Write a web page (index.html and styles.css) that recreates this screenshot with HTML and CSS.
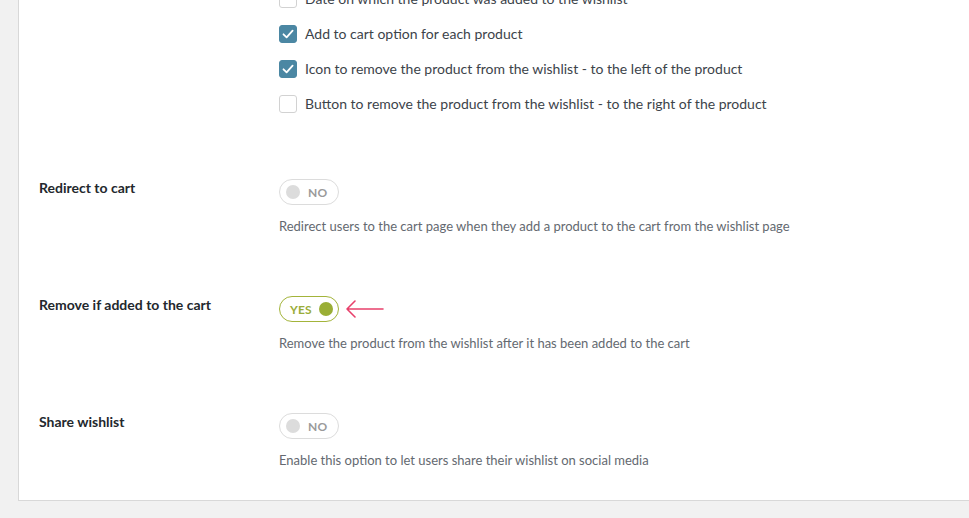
FILE: index.html
```
<!DOCTYPE html>
<html>
<head>
<meta charset="utf-8">
<link rel="stylesheet" href="styles.css">
</head>
<body>
<div class="panel">
  <div class="setting checks-setting">
    <div class="label"></div>
    <div class="field">
      <ul class="checks">
        <li><span class="cb"></span><span>Date on which the product was added to the wishlist</span></li>
        <li><span class="cb on"><svg viewBox="0 0 18 18" width="18" height="18"><path d="M4.5 9.3 L7.6 12.3 L13.6 5.6" fill="none" stroke="#fff" stroke-width="1.8" stroke-linecap="round" stroke-linejoin="round"/></svg></span><span>Add to cart option for each product</span></li>
        <li><span class="cb on"><svg viewBox="0 0 18 18" width="18" height="18"><path d="M4.5 9.3 L7.6 12.3 L13.6 5.6" fill="none" stroke="#fff" stroke-width="1.8" stroke-linecap="round" stroke-linejoin="round"/></svg></span><span>Icon to remove the product from the wishlist - to the left of the product</span></li>
        <li><span class="cb"></span><span>Button to remove the product from the wishlist - to the right of the product</span></li>
      </ul>
    </div>
  </div>

  <div class="setting">
    <div class="label">Redirect to cart</div>
    <div class="field">
      <div class="toggle-line"><span class="toggle off"><span class="knob"></span><span class="tt">NO</span></span></div>
      <p class="desc">Redirect users to the cart page when they add a product to the cart from the wishlist page</p>
    </div>
  </div>

  <div class="setting">
    <div class="label">Remove if added to the cart</div>
    <div class="field">
      <div class="toggle-line">
        <span class="toggle yes"><span class="tt">YES</span><span class="knob"></span></span>
        <svg class="arrow" width="40" height="20" viewBox="0 0 40 20"><path d="M2 10 H38 M10 2 L2 10 L10 18" fill="none" stroke="#e8406b" stroke-width="1.6" stroke-linecap="round" stroke-linejoin="round"/></svg>
      </div>
      <p class="desc">Remove the product from the wishlist after it has been added to the cart</p>
    </div>
  </div>

  <div class="setting last">
    <div class="label">Share wishlist</div>
    <div class="field">
      <div class="toggle-line"><span class="toggle off"><span class="knob"></span><span class="tt">NO</span></span></div>
      <p class="desc">Enable this option to let users share their wishlist on social media</p>
    </div>
  </div>
</div>
</body>
</html>
```
FILE: styles.css
```
html, body {
  margin: 0;
  padding: 0;
  background: #f1f1f1;
  overflow: hidden;
}
body {
  font-family: Lato, "Liberation Sans", sans-serif;
  font-size: 13px;
  color: #3c434a;
}
.panel {
  margin: -19px 0 0 18px;
  background: #fff;
  border-left: 1px solid #d8d8d8;
  border-bottom: 1px solid #d8d8d8;
  padding: 0 0 32px 20px;
  display: flex;
  flex-direction: column;
  gap: 62px;
}
.setting {
  display: grid;
  grid-template-columns: 240px 1fr;
  align-items: start;
}
.checks-setting {
  margin-bottom: -4px;
}
.label {
  font-size: 14px;
  font-weight: 700;
  color: #23282d;
  line-height: 20px;
  margin-top: -1px;
}
.checks {
  list-style: none;
  margin: 0;
  padding: 0;
}
.checks li {
  height: 35px;
  display: flex;
  align-items: center;
  gap: 8px;
  font-size: 14px;
  color: #3c434a;
}
.cb {
  width: 18px;
  height: 18px;
  box-sizing: border-box;
  border: 1px solid #d2d2d2;
  border-radius: 3px;
  background: #fff;
  display: inline-flex;
  flex: none;
}
.cb.on {
  background: #4b87a3;
  border-color: #4b87a3;
}
.cb svg {
  margin: -1px;
}
.toggle-line {
  display: flex;
  align-items: center;
  gap: 8px;
  height: 26px;
}
.toggle {
  width: 60px;
  height: 26px;
  box-sizing: border-box;
  border: 1px solid #dcdcdc;
  border-radius: 13px;
  display: flex;
  align-items: center;
  font-weight: 700;
  font-size: 12px;
  letter-spacing: 0.2px;
}
.toggle .knob {
  width: 14px;
  height: 14px;
  border-radius: 50%;
  background: #dcdcdc;
  flex: none;
}
.toggle.off {
  padding-left: 6px;
  gap: 8px;
  color: #9a9a9a;
}
.toggle.yes {
  border-color: #a3b43a;
  color: #9aad3a;
  padding-left: 10px;
  gap: 7px;
}
.toggle.yes .knob {
  background: #9aae35;
}
.arrow {
  margin-left: -2px;
}
.desc {
  margin: 13px 0 0;
  line-height: 16px;
  color: #646970;
}
```
